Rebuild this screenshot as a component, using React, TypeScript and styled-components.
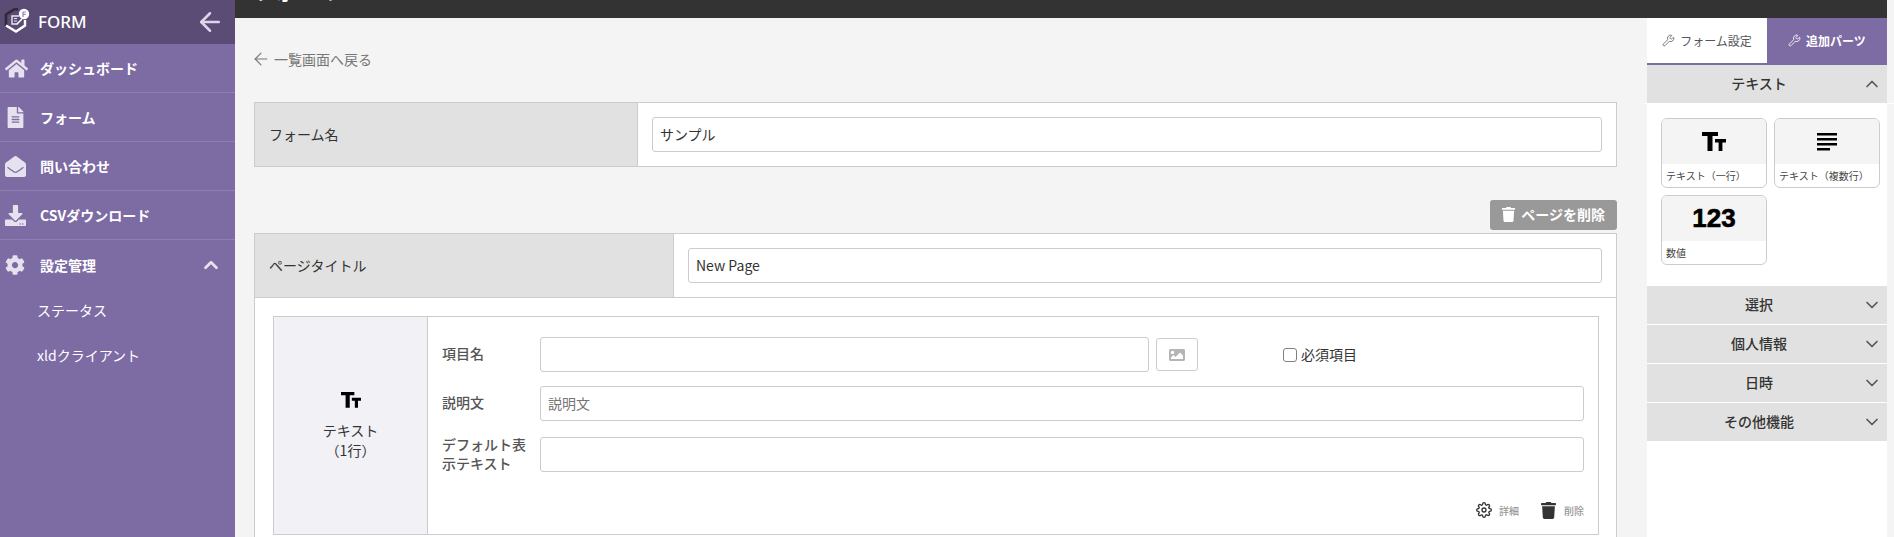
import { FC, ReactNode } from 'react'
import styled, { createGlobalStyle } from 'styled-components'
import { FaHome, FaFileAlt, FaEnvelopeOpen, FaDownload, FaCog, FaTrash, FaImage } from 'react-icons/fa'
import { FiChevronUp, FiChevronDown, FiArrowLeft, FiSettings } from 'react-icons/fi'
import { Wrench } from 'lucide-react'

const GlobalStyle = createGlobalStyle`
  html, body {
    margin: 0;
    padding: 0;
    height: 537px;
    overflow: hidden;
    background: #f4f4f4;
    font-family: "Noto Sans CJK JP", "Noto Sans", sans-serif;
    color: #333;
  }
  * { box-sizing: border-box; }
`

const TtIcon: FC<{ size: number }> = ({ size }) => (
  <svg width={size} height={(size * 19) / 24} viewBox="0 0 24 19" fill="#000">
    <path d="M0 0h16v4H10.5v15H5.5V4H0z" />
    <path d="M13 7h11v3.4h-3.6V19h-3.8v-8.6H13z" />
  </svg>
)

const LinesIcon = () => (
  <svg width="20" height="18" viewBox="0 0 20 18" fill="#000">
    <path d="M0 0h20v2.4H0zM0 5h20v2.4H0zM0 10h20v2.4H0zM0 15h13v2.4H0z" />
  </svg>
)

const Logo = () => (
  <svg width="26" height="26" viewBox="0 0 26 26" fill="none">
    <path d="M14 1.5L11 1 2 6.5V18" stroke="#2e2a38" strokeWidth="2.6" />
    <path d="M2 17.5l10 6 9-6V12" stroke="#fff" strokeWidth="2.4" />
    <path d="M15 8H8v8h6" stroke="#e9e6f0" strokeWidth="1.4" />
    <path d="M10 10.5h3M10 13h3" stroke="#e9e6f0" strokeWidth="1.2" />
    <path d="M13 16l5-5" stroke="#fff" strokeWidth="1.6" />
    <circle cx="20" cy="6" r="5.2" fill="#fff" />
    <path d="M18.4 3.4h3.6v1.2h-2.3v1.2h2v1.2h-2v2.1h-1.3z" fill="#9a86c6" />
  </svg>
)

type NavItemProps = { icon: ReactNode; label: string; open?: boolean }

const NavItem: FC<NavItemProps> = ({ icon, label, open }) => (
  <StyledNavItem>
    <StyledNavIcon>{icon}</StyledNavIcon>
    <span>{label}</span>
    {open && (
      <StyledNavCaret>
        <FiChevronUp size={22} strokeWidth={3} />
      </StyledNavCaret>
    )}
  </StyledNavItem>
)

type PartCardProps = { icon: ReactNode; label: string }

const PartCard: FC<PartCardProps> = ({ icon, label }) => (
  <StyledCard>
    <StyledCardHead>{icon}</StyledCardHead>
    <StyledCardLabel>{label}</StyledCardLabel>
  </StyledCard>
)

const AccordionHead: FC<{ label: string; open?: boolean }> = ({ label, open }) => (
  <StyledAccordion $open={open}>
    {label}
    <StyledAccordionCaret>
      {open ? <FiChevronUp size={20} /> : <FiChevronDown size={20} />}
    </StyledAccordionCaret>
  </StyledAccordion>
)

export default function App() {
  return (
    <StyledPage>
      <GlobalStyle />
      <StyledSidebar>
        <StyledBrand>
          <Logo />
          <StyledBrandName>FORM</StyledBrandName>
          <StyledBrandBack>
            <FiArrowLeft size={30} strokeWidth={2} />
          </StyledBrandBack>
        </StyledBrand>
        <NavItem icon={<FaHome size={23} />} label="ダッシュボード" />
        <NavItem icon={<FaFileAlt size={21} />} label="フォーム" />
        <NavItem icon={<FaEnvelopeOpen size={21} />} label="問い合わせ" />
        <NavItem icon={<FaDownload size={21} />} label="CSVダウンロード" />
        <NavItem icon={<FaCog size={20} />} label="設定管理" open />
        <StyledSubItem>ステータス</StyledSubItem>
        <StyledSubItem>xldクライアント</StyledSubItem>
      </StyledSidebar>

      <StyledRight>
        <StyledTopBar>
          <StyledTopTitle>フォーム</StyledTopTitle>
        </StyledTopBar>
        <StyledBody>
          <StyledMain>
            <StyledBack>
              <FiArrowLeft size={20} strokeWidth={1.4} />
              一覧画面へ戻る
            </StyledBack>

            <StyledFormRow>
              <StyledRowLabel $width={383}>フォーム名</StyledRowLabel>
              <StyledRowValue>
                <StyledInput defaultValue="サンプル" />
              </StyledRowValue>
            </StyledFormRow>

            <StyledPageActions>
              <StyledDeletePage>
                <FaTrash size={15} />
                ページを削除
              </StyledDeletePage>
            </StyledPageActions>

            <StyledPageBox>
              <StyledPageTitleRow>
                <StyledRowLabel $width={419}>ページタイトル</StyledRowLabel>
                <StyledRowValue>
                  <StyledInput defaultValue="New Page" />
                </StyledRowValue>
              </StyledPageTitleRow>

              <StyledItem>
                <StyledItemKind>
                  <TtIcon size={20} />
                  <StyledItemKindText>
                    テキスト
                    <br />
                    （1行）
                  </StyledItemKindText>
                </StyledItemKind>
                <StyledItemBody>
                  <StyledField>
                    <StyledFieldLabel>項目名</StyledFieldLabel>
                    <StyledNameInput />
                    <StyledImageButton>
                      <FaImage size={16} />
                    </StyledImageButton>
                    <StyledRequired>
                      <StyledCheck type="checkbox" />
                      必須項目
                    </StyledRequired>
                  </StyledField>
                  <StyledField>
                    <StyledFieldLabel>説明文</StyledFieldLabel>
                    <StyledInput placeholder="説明文" />
                  </StyledField>
                  <StyledField>
                    <StyledFieldLabel>デフォルト表示テキスト</StyledFieldLabel>
                    <StyledInput />
                  </StyledField>
                  <StyledItemActions>
                    <StyledAction>
                      <FiSettings size={16} color="#333" />
                      詳細
                    </StyledAction>
                    <StyledAction>
                      <FaTrash size={17} color="#333" />
                      削除
                    </StyledAction>
                  </StyledItemActions>
                </StyledItemBody>
              </StyledItem>
            </StyledPageBox>
          </StyledMain>

          <StyledPanel>
            <StyledTabs>
              <StyledTab>
                <Wrench size={13} strokeWidth={1.4} />
                フォーム設定
              </StyledTab>
              <StyledTab $active>
                <Wrench size={13} strokeWidth={1.6} />
                追加パーツ
              </StyledTab>
            </StyledTabs>
            <AccordionHead label="テキスト" open />
            <StyledCards>
              <PartCard icon={<TtIcon size={24} />} label="テキスト（一行）" />
              <PartCard icon={<LinesIcon />} label="テキスト（複数行）" />
              <PartCard icon={<StyledNumbers>123</StyledNumbers>} label="数値" />
            </StyledCards>
            <AccordionHead label="選択" />
            <AccordionHead label="個人情報" />
            <AccordionHead label="日時" />
            <AccordionHead label="その他機能" />
          </StyledPanel>
        </StyledBody>
      </StyledRight>
    </StyledPage>
  )
}

const StyledPage = styled.div`
  display: flex;
  width: 1894px;
  height: 537px;
  overflow: hidden;
`

const StyledSidebar = styled.aside`
  flex: 0 0 235px;
  background: #7d6ba4;
  color: #fff;
`

const StyledBrand = styled.div`
  display: flex;
  align-items: center;
  height: 44px;
  padding: 0 10px 0 4px;
  background: #5a4c75;

  > svg {
    margin-bottom: 3px;
  }
`

const StyledBrandName = styled.span`
  margin-left: 8px;
  padding-bottom: 2px;
  font-size: 17px;
  font-weight: 500;
  font-family: "Noto Sans", sans-serif;
`

const StyledBrandBack = styled.span`
  display: flex;
  margin-left: auto;
  color: #ddd6ea;
`

const StyledNavItem = styled.div`
  display: flex;
  align-items: center;
  height: 49px;
  padding: 0 13px 0 5px;
  border-bottom: 1px solid #8f7fb2;
  font-size: 14px;
  font-weight: 700;

  &:nth-of-type(6) {
    border-bottom: 0;
  }
`

const StyledNavIcon = styled.span`
  display: flex;
  justify-content: flex-start;
  width: 24px;
  margin-right: 11px;
  color: #e6e1ef;
`

const StyledNavCaret = styled.span`
  display: flex;
  margin-left: auto;
  color: #e6e1ef;
`

const StyledSubItem = styled.div`
  display: flex;
  align-items: center;
  height: 45px;
  padding: 0 0 4px 37px;
  font-size: 14px;
`

const StyledRight = styled.div`
  display: flex;
  flex: 1;
  flex-direction: column;
  min-width: 0;
`

const StyledTopBar = styled.div`
  flex: 0 0 18px;
  margin-right: 7px;
  padding-left: 19px;
  overflow: hidden;
  background: #333;
`

const StyledTopTitle = styled.div`
  margin-top: -23px;
  font-size: 20px;
  font-weight: 700;
  line-height: 30px;
  color: #fff;
  white-space: nowrap;
`

const StyledBody = styled.div`
  display: flex;
  flex: 1;
  min-height: 0;
  padding-right: 7px;
`

const StyledMain = styled.main`
  flex: 0 0 1412px;
  padding: 0 30px 0 19px;
`

const StyledBack = styled.div`
  display: flex;
  align-items: center;
  gap: 3px;
  height: 84px;
  margin-left: -3px;
  padding-bottom: 3px;
  font-size: 14px;
  color: #777;
`

const StyledFormRow = styled.div`
  display: flex;
  height: 65px;
  border: 1px solid #ccc;
  background: #fff;
`

const StyledRowLabel = styled.div<{ $width: number }>`
  display: flex;
  flex: 0 0 ${({ $width }) => $width}px;
  align-items: center;
  padding: 0 0 2px 14px;
  border-right: 1px solid #ccc;
  background: #e1e1e1;
  font-size: 14px;
`

const StyledRowValue = styled.div`
  display: flex;
  flex: 1;
  align-items: center;
  padding: 0 14px;
`

const StyledInput = styled.input`
  width: 100%;
  height: 35px;
  padding: 0 7px 2px;
  border: 1px solid #ccc;
  border-radius: 3px;
  background: #fff;
  font-family: inherit;
  font-size: 14px;
  color: #333;

  &::placeholder {
    color: #757575;
  }
`

const StyledPageActions = styled.div`
  display: flex;
  justify-content: flex-end;
  margin-top: 33px;
  margin-bottom: 3px;
`

const StyledDeletePage = styled.button`
  display: flex;
  align-items: center;
  gap: 5px;
  height: 30px;
  padding: 0 12px 2px 11px;
  border: 0;
  border-radius: 3px;
  background: #999;
  color: #fff;
  font-family: inherit;
  font-size: 14px;
  font-weight: 700;
`

const StyledPageBox = styled.section`
  height: 400px;
  border: 1px solid #ccc;
  background: #fff;
`

const StyledPageTitleRow = styled.div`
  display: flex;
  height: 64px;
  border-bottom: 1px solid #ccc;
`

const StyledItem = styled.div`
  display: flex;
  height: 219px;
  margin: 18px 17px 0 18px;
  border: 1px solid #ccc;
`

const StyledItemKind = styled.div`
  display: flex;
  flex: 0 0 154px;
  flex-direction: column;
  align-items: center;
  padding-top: 75px;
  border-right: 1px solid #ccc;
  background: #f1f1f6;
`

const StyledItemKindText = styled.div`
  margin-top: 12px;
  font-size: 14px;
  line-height: 20px;
  text-align: center;
`

const StyledItemBody = styled.div`
  flex: 1;
  min-width: 0;
  padding: 20px 14px 0;
`

const StyledField = styled.div`
  display: flex;
  align-items: center;
  height: 35px;
  margin-bottom: 14px;

  &:nth-of-type(2) {
    margin-bottom: 16px;
  }
`

const StyledFieldLabel = styled.label`
  flex: 0 0 98px;
  padding: 0 10px 2px 0;
  font-size: 14px;
  font-weight: 500;
  line-height: 19px;
  color: #555;
`

const StyledNameInput = styled(StyledInput)`
  flex: 0 0 609px;
  width: 609px;
`

const StyledImageButton = styled.div`
  display: flex;
  align-items: center;
  justify-content: center;
  width: 42px;
  height: 33px;
  margin-left: 7px;
  border: 1px solid #ccc;
  border-radius: 3px;
  color: #b5b5b5;
`

const StyledRequired = styled.label`
  display: flex;
  align-items: center;
  margin-left: 85px;
  padding-bottom: 2px;
  font-size: 14px;
`

const StyledCheck = styled.input`
  width: 14px;
  height: 14px;
  margin: 3px 4px 0 0;
  appearance: none;
  border: 1.5px solid #808080;
  border-radius: 3px;
  background: #fff;
`

const StyledItemActions = styled.div`
  display: flex;
  justify-content: flex-end;
  gap: 21px;
  margin-top: 29px;
`

const StyledAction = styled.div`
  display: flex;
  align-items: center;
  gap: 7px;
  height: 18px;
  font-size: 10px;
  font-weight: 500;
  color: #999;
`

const StyledPanel = styled.aside`
  flex: 0 0 240px;
  background: #fff;
`

const StyledTabs = styled.div`
  display: flex;
  height: 47px;
  border-bottom: 2px solid #7d6ba4;
`

const StyledTab = styled.div<{ $active?: boolean }>`
  display: flex;
  flex: 1;
  align-items: center;
  justify-content: center;
  gap: 5px;
  font-size: 12px;
  background: ${({ $active }) => ($active ? '#7d6ba4' : '#fff')};
  color: ${({ $active }) => ($active ? '#fff' : '#555')};
  font-weight: ${({ $active }) => ($active ? 700 : 400)};
`

const StyledAccordion = styled.div<{ $open?: boolean }>`
  position: relative;
  display: flex;
  align-items: center;
  justify-content: center;
  height: 38px;
  margin-bottom: 1px;
  padding: 0 16px 2px 0;
  background: #e1e1e1;
  font-size: 14px;
  font-weight: 500;

  ${({ $open }) =>
    $open &&
    `
    &::after {
      content: '';
      position: absolute;
      left: -3px;
      right: -7px;
      bottom: -1px;
      height: 1px;
      background: #fff;
    }
  `}
`

const StyledAccordionCaret = styled.span`
  position: absolute;
  top: 9px;
  right: 5px;
  display: flex;
  color: #555;
`

const StyledCards = styled.div`
  display: grid;
  grid-template-columns: 106px 106px;
  grid-auto-rows: 70px;
  gap: 7px;
  padding: 14px 7px 21px 14px;
`

const StyledCard = styled.div`
  overflow: hidden;
  border: 1px solid #ccc;
  border-radius: 6px;
`

const StyledCardHead = styled.div`
  display: flex;
  align-items: center;
  justify-content: center;
  height: 45px;
  background: #f4f4f4;
`

const StyledCardLabel = styled.div`
  padding-left: 4px;
  font-size: 10px;
  line-height: 24px;
  color: #444;
  white-space: nowrap;
`

const StyledNumbers = styled.span`
  font-family: "Liberation Sans", sans-serif;
  font-size: 26px;
  font-weight: 700;
  color: #000;
  -webkit-text-stroke: 0.6px #000;
`
